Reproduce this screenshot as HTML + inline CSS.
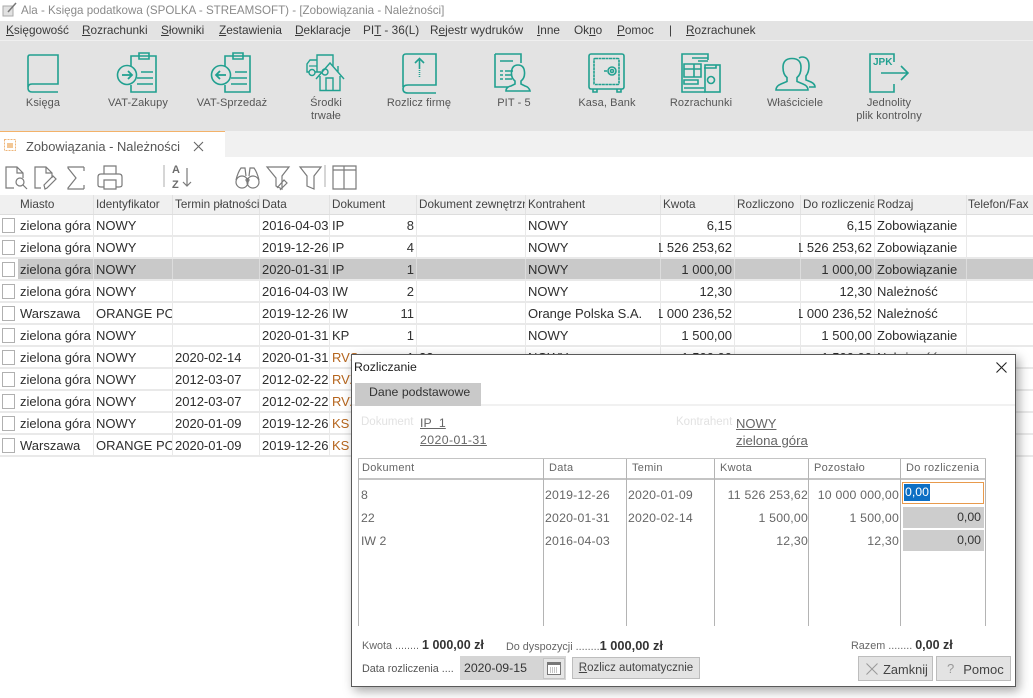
<!DOCTYPE html>
<html><head><meta charset="utf-8"><style>
html,body{margin:0;padding:0;width:1033px;height:698px;overflow:hidden;background:#fff;font-family:"Liberation Sans",sans-serif;color:#333}
.a{position:absolute;white-space:nowrap}
u{text-decoration:underline}
.m{top:23px;font-size:11.8px;color:#3a3a3a}
.l{top:97px;font-size:11px;color:#555;text-align:center;line-height:13px;letter-spacing:.1px;transform:translateX(-50%)}
.r{position:absolute;left:0;width:1033px;height:20px;border-bottom:2px solid #e9e9e9}
.r.h{height:19px;top:195px;background:#f0f0f0;border-bottom:1px solid #ddd}
.r.s{background:linear-gradient(#c9c9c9,#c9c9c9) 18px 0 no-repeat}
.r>i{position:absolute;font-style:normal;top:0;height:100%;line-height:21px;font-size:13px;color:#2e2e2e;overflow:hidden;white-space:nowrap;border-right:1px solid #e9e9e9;box-sizing:content-box;display:flex;justify-content:flex-start}
.r.h>i{font-size:11.7px;line-height:20px;color:#444;border-right:1px solid #e2e2e2}
.r.s>i{border-right-color:#dcdcdc}
.r>b{position:absolute;left:2px;top:3px;width:11px;height:13px;border:1px solid #b0b0b0;background:#fff}
.c1{left:20px;width:73px}.c2{left:96px;width:76px}.c3{left:175px;width:84px}.c4{left:262px;width:67px}
.c5{left:332px;width:84px}.c6{left:419px;width:106px}.c7{left:528px;width:132px}
.c8{left:659px;width:73px;padding-right:2px;justify-content:flex-end!important}.c9{left:737px;width:63px}
.c10{left:799px;width:73px;padding-right:2px;justify-content:flex-end!important}.c11{left:877px;width:89px}.c12{left:968px;width:65px;border:0!important}
.n{position:absolute;left:332px;top:0;width:82px;text-align:right;line-height:21px;font-size:13px;z-index:2}
.o{color:#b5651d!important}
.g{position:absolute;font-size:12.3px;color:#666;white-space:nowrap}
.t{letter-spacing:.2px}
.v{position:absolute;top:459px;width:1px;height:167px;background:#b4b4b4}
.btn{position:absolute;background:#e3e3e3;border:1px solid #bdbdbd;box-sizing:border-box;font-size:12.3px;color:#444;text-align:center}
</style></head><body>

<!-- title bar -->
<svg class="a" style="left:2px;top:2px" width="16" height="16" viewBox="0 0 16 16"><path d="M1 4h10v10H1z" fill="#e2e2e2" stroke="#aaa"/><path d="M6 10L14 1" stroke="#777" stroke-width="1.500"/></svg>
<div class="a" style="left:21px;top:3px;font-size:11.6px;line-height:15px;color:#8a8a8a">Ala - Księga podatkowa (SPOLKA - STREAMSOFT) - [Zobowiązania - Należności]</div>

<!-- ribbon -->
<div class="a" style="left:0;top:21px;width:1033px;height:110px;background:#e3e3e3"></div>
<div class="a" style="left:0;top:40px;width:1033px;height:1px;background:#efefef"></div>
<div class="a m" style="left:6px"><u>K</u>sięgowość</div>
<div class="a m" style="left:82px"><u>R</u>ozrachunki</div>
<div class="a m" style="left:161px"><u>S</u>łowniki</div>
<div class="a m" style="left:219px"><u>Z</u>estawienia</div>
<div class="a m" style="left:295px"><u>D</u>eklaracje</div>
<div class="a m" style="left:363px">PI<u>T</u> - 36(L)</div>
<div class="a m" style="left:430px">R<u>e</u>jestr wydruków</div>
<div class="a m" style="left:537px"><u>I</u>nne</div>
<div class="a m" style="left:574px">Ok<u>n</u>o</div>
<div class="a m" style="left:617px"><u>P</u>omoc</div>
<div class="a m" style="left:669px">|</div>
<div class="a m" style="left:686px"><u>R</u>ozrachunek</div>

<svg class="a" style="left:0;top:45px" width="1033" height="55" viewBox="0 45 1033 55" fill="none" stroke="#21a090" stroke-width="1.6">
<!-- ksiega -->
<path d="M28 87V57q0-2 2-2H58V84H32q-4 0-4 4t4 4H58"/>
<!-- vat zakupy -->
<path d="M131 66V56H156V92H131V85M139 56V53H149V59H139V56M141 72H153M137 78H153M137 84H153"/><circle cx="127" cy="75" r="9.5"/>
<path d="M122 75H132M128 71l4 4-4 4" stroke-width="1.8"/>
<!-- vat sprzedaz -->
<path d="M225 66V56H250V92H225V85M233 56V53H243V59H233V56M235 72H247M231 78H247M231 84H247"/><circle cx="221" cy="75" r="9.5"/>
<path d="M216 75H226M220 71l-4 4 4 4" stroke-width="1.8"/>
<!-- srodki -->
<path d="M317 72V55H333V66M317 60H310L307 64V72H309M315 72H321" stroke-width="1.4"/><path d="M309 66H317" stroke-width="1.200"/><circle cx="312" cy="72.500" r="3" stroke-width="1.4"/><circle cx="325" cy="72" r="3" stroke-width="1.4"/>
<path d="M316 79L330 63 344 79M338 72V66M320 76V90.500H340V76M326 90.500V78H333V90.500" stroke-width="1.4"/>
<!-- rozlicz -->
<path d="M403 87V57q0-3 3-3H436V85H408q-5 0-5 4t5 4H436"/>
<path d="M419.500 60V78" stroke-dasharray="9 1 1 1 1 1 1 1 1 1"/><path d="M415 63l4.500-4.500L424 63"/>
<!-- pit -->
<path d="M495 54H521V63M495 54V87H508M500 61H513M500 71H503M505 71H513M500 75H503M505 75H512M500 79H503M505 79H512"/>
<path d="M506 91q0-4 5-5l4-2v-3q-4-3-3.500-9 .5-7 6.500-7t6.500 7q.5 6-3.500 9v3l4 2q4 1 5 5z"/>
<!-- kasa -->
<rect x="589" y="54" width="35" height="35" rx="2"/><rect x="594" y="58.500" width="25" height="26" rx="1" stroke-dasharray="3 .5"/><circle cx="612" cy="71" r="4"/><circle cx="612" cy="71" r="1.500"/><path d="M607 71H604M593 89v3h4v-3M617 89v3h4v-3"/>
<!-- rozrachunki -->
<path d="M708 60V54H682V92H705M692 58H708M698 61H708M684 64H701V77H684ZM684 69H701M694 64V77M684 80H698V84H684ZM684 88H704"/>
<rect x="705" y="65" width="15" height="27"/><path d="M704 68H716V65"/><circle cx="711" cy="80" r="3.500"/>
<!-- wlasciciele -->
<path d="M776 90q0-4 5-6l6-2.500v-4q-4-3-4-10 0-9 9-9t9 9q0 7-4 10v4l6 2.500q5 2 5 6z"/>
<path d="M799 58q2-1 3-1 7 0 7 9 0 6-3 10v4l5 2q4 2 4 5h-6"/>
<!-- jpk -->
<path d="M894 62V54H870V92H894V84M881 73H908M901 66l7 7-7 7"/>
</svg>
<div class="a" style="left:873px;top:56px;font-size:10.500px;font-weight:bold;color:#21a090;transform:scaleX(.95);transform-origin:left">JPK</div>

<div class="a l" style="left:43px">Księga</div>
<div class="a l" style="left:138px">VAT-Zakupy</div>
<div class="a l" style="left:232px">VAT-Sprzedaż</div>
<div class="a l" style="left:326px">Środki<br>trwałe</div>
<div class="a l" style="left:419px">Rozlicz firmę</div>
<div class="a l" style="left:514px">PIT - 5</div>
<div class="a l" style="left:607px">Kasa, Bank</div>
<div class="a l" style="left:701px">Rozrachunki</div>
<div class="a l" style="left:795px">Właściciele</div>
<div class="a l" style="left:889px">Jednolity<br>plik kontrolny</div>

<!-- tab bar -->
<div class="a" style="left:0;top:131px;width:1033px;height:26px;background:#f1f1f1"></div>
<div class="a" style="left:0;top:131px;width:225px;height:27px;background:#fff;border-top:1px solid #f3b26a;box-sizing:border-box"></div>
<svg class="a" style="left:3px;top:138px" width="14" height="14"><rect x="1.500" y="1.500" width="11" height="11" fill="#fff" stroke="#eeb57a" stroke-dasharray="2 1"/><rect x="4" y="5" width="6" height="5" fill="#f3c795"/></svg>
<div class="a" style="left:26px;top:139px;font-size:12.9px;color:#555">Zobowiązania - Należności</div>
<svg class="a" style="left:193px;top:141px" width="11" height="11" stroke="#666" stroke-width="1.100"><path d="M1 1L10 10M10 1L1 10"/></svg>

<!-- toolbar -->
<svg class="a" style="left:0;top:157px" width="360" height="38" viewBox="0 157 360 38" fill="none" stroke="#7a7a7a" stroke-width="1.200">
<path d="M14 188H6V167H17L23 173V178M17 167V173H23"/><circle cx="20" cy="182" r="4"/><path d="M23 185L27 189"/>
<path d="M41 188H35V167H46L52 173V178M46 167V173H52M45 189L44 185 53 176 56 179 47 188Z"/>
<path d="M84 167H68V168L76 178 68 188V189H84M84 167V171M84 189V185"/>
<path d="M104 174V166H116V174M101 174H119Q122 174 122 177V185Q122 187 119 187H116M104 187H101Q98 187 98 185V177Q98 174 101 174M104 180H116V189H104Z"/>
<path d="M164 165V187" stroke="#bbb"/>
<path d="M187 168V186M183 182L187 186 191 182"/>
<path d="M325 165V187" stroke="#bbb"/>
<circle cx="242" cy="182" r="6"/><circle cx="253" cy="182" r="6"/><circle cx="247.500" cy="180" r="1.500"/><path d="M236 180Q238 172 241 168H245L246 176M259 180Q257 172 254 168H250L249 176"/>
<path d="M267 167H289L282 176V189L276 186V178ZM277 188L284 180 287 183 280 190"/>
<path d="M300 167H321L314 176V189L307 186V176Z"/>
<path d="M333 166H356V189H333ZM333 170H356M344 166V189"/>
</svg>
<div class="a" style="left:172px;top:163px;font-size:11px;font-weight:bold;color:#6c6c6c;line-height:15px">A<br>Z</div>

<!-- grid -->
<div class="r h"><i class="c1">Miasto</i><i class="c2">Identyfikator</i><i class="c3">Termin płatności</i><i class="c4">Data</i><i class="c5">Dokument</i><i class="c6">Dokument zewnętrzn</i><i class="c7">Kontrahent</i><i class="c8" style="justify-content:flex-start!important;left:663px;width:71px;padding:0">Kwota</i><i class="c9">Rozliczono</i><i class="c10" style="justify-content:flex-start!important;left:803px;width:71px;padding:0">Do rozliczenia</i><i class="c11">Rodzaj</i><i class="c12">Telefon/Fax</i></div>

<div class="r" style="top:215px"><b></b><i class="c1">zielona góra</i><i class="c2">NOWY</i><i class="c3"></i><i class="c4">2016-04-03</i><i class="c5">IP</i><span class="n">8</span><i class="c6"></i><i class="c7">NOWY</i><i class="c8">6,15</i><i class="c9"></i><i class="c10">6,15</i><i class="c11">Zobowiązanie</i><i class="c12"></i></div>
<div class="r" style="top:237px"><b></b><i class="c1">zielona góra</i><i class="c2">NOWY</i><i class="c3"></i><i class="c4">2019-12-26</i><i class="c5">IP</i><span class="n">4</span><i class="c6"></i><i class="c7">NOWY</i><i class="c8">11 526 253,62</i><i class="c9"></i><i class="c10">11 526 253,62</i><i class="c11">Zobowiązanie</i><i class="c12"></i></div>
<div class="r s" style="top:259px"><b></b><i class="c1">zielona góra</i><i class="c2">NOWY</i><i class="c3"></i><i class="c4">2020-01-31</i><i class="c5">IP</i><span class="n">1</span><i class="c6"></i><i class="c7">NOWY</i><i class="c8">1 000,00</i><i class="c9"></i><i class="c10">1 000,00</i><i class="c11">Zobowiązanie</i><i class="c12"></i></div>
<div class="r" style="top:281px"><b></b><i class="c1">zielona góra</i><i class="c2">NOWY</i><i class="c3"></i><i class="c4">2016-04-03</i><i class="c5">IW</i><span class="n">2</span><i class="c6"></i><i class="c7">NOWY</i><i class="c8">12,30</i><i class="c9"></i><i class="c10">12,30</i><i class="c11">Należność</i><i class="c12"></i></div>
<div class="r" style="top:303px"><b></b><i class="c1">Warszawa</i><i class="c2">ORANGE POLSKA</i><i class="c3"></i><i class="c4">2019-12-26</i><i class="c5">IW</i><span class="n">11</span><i class="c6"></i><i class="c7">Orange Polska S.A.</i><i class="c8">11 000 236,52</i><i class="c9"></i><i class="c10">11 000 236,52</i><i class="c11">Należność</i><i class="c12"></i></div>
<div class="r" style="top:325px"><b></b><i class="c1">zielona góra</i><i class="c2">NOWY</i><i class="c3"></i><i class="c4">2020-01-31</i><i class="c5">KP</i><span class="n">1</span><i class="c6"></i><i class="c7">NOWY</i><i class="c8">1 500,00</i><i class="c9"></i><i class="c10">1 500,00</i><i class="c11">Zobowiązanie</i><i class="c12"></i></div>
<div class="r" style="top:347px"><b></b><i class="c1">zielona góra</i><i class="c2">NOWY</i><i class="c3">2020-02-14</i><i class="c4">2020-01-31</i><i class="c5 o">RVS</i><span class="n">1</span><i class="c6">22</i><i class="c7">NOWY</i><i class="c8">1 500,00</i><i class="c9"></i><i class="c10">1 500,00</i><i class="c11">Należność</i><i class="c12"></i></div>
<div class="r" style="top:369px"><b></b><i class="c1">zielona góra</i><i class="c2">NOWY</i><i class="c3">2012-03-07</i><i class="c4">2012-02-22</i><i class="c5 o">RVZ</i><i class="c6"></i><i class="c7"></i><i class="c8"></i><i class="c9"></i><i class="c10"></i><i class="c11"></i><i class="c12"></i></div>
<div class="r" style="top:391px"><b></b><i class="c1">zielona góra</i><i class="c2">NOWY</i><i class="c3">2012-03-07</i><i class="c4">2012-02-22</i><i class="c5 o">RVZ</i><i class="c6"></i><i class="c7"></i><i class="c8"></i><i class="c9"></i><i class="c10"></i><i class="c11"></i><i class="c12"></i></div>
<div class="r" style="top:413px"><b></b><i class="c1">zielona góra</i><i class="c2">NOWY</i><i class="c3">2020-01-09</i><i class="c4">2019-12-26</i><i class="c5 o">KS</i><i class="c6"></i><i class="c7"></i><i class="c8"></i><i class="c9"></i><i class="c10"></i><i class="c11"></i><i class="c12"></i></div>
<div class="r" style="top:435px"><b></b><i class="c1">Warszawa</i><i class="c2">ORANGE POLSKA</i><i class="c3">2020-01-09</i><i class="c4">2019-12-26</i><i class="c5 o">KS</i><i class="c6"></i><i class="c7"></i><i class="c8"></i><i class="c9"></i><i class="c10"></i><i class="c11"></i><i class="c12"></i></div>

<!-- dialog -->
<div class="a" style="left:351px;top:354px;width:665px;height:333px;background:#fff;border:1px solid #5a5a5a;box-sizing:border-box;box-shadow:3px 4px 10px rgba(0,0,0,.35);z-index:5">
</div>
<div style="position:absolute;left:0;top:0;width:1033px;height:698px;z-index:6">
<div class="a" style="left:354px;top:360px;font-size:12.300px;color:#222">Rozliczanie</div>
<svg class="a" style="left:996px;top:362px" width="11" height="11" stroke="#222" stroke-width="1.100"><path d="M.5 .5L10.500 10.500M10.500 .5L.5 10.500"/></svg>
<div class="a" style="left:352px;top:404px;width:663px;height:2px;background:#f1f1f1"></div>
<div class="a" style="left:355px;top:383px;width:126px;height:23px;background:#c9c9c9;font-size:12.300px;color:#333;line-height:18px;text-indent:14px">Dane podstawowe</div>

<div class="g" style="left:361px;top:416px;color:#e2e2e2;font-size:11.500px">Dokument</div>
<div class="g" style="left:420px;top:416px;text-decoration:underline;letter-spacing:.1px">IP&nbsp; 1</div>
<div class="g" style="left:420px;top:433px;text-decoration:underline;letter-spacing:.4px">2020-01-31</div>
<div class="g" style="left:676px;top:416px;color:#e2e2e2;font-size:11.500px">Kontrahent</div>
<div class="g" style="left:736px;top:416px;text-decoration:underline;font-size:13px">NOWY</div>
<div class="g" style="left:736px;top:433px;text-decoration:underline;font-size:13.200px">zielona góra</div>

<div class="a" style="left:358px;top:458px;width:628px;height:1px;background:#c4c4c4"></div>
<div class="a" style="left:358px;top:478px;width:628px;height:2px;background:#c4c4c4"></div>
<div class="v" style="left:358px"></div><div class="v" style="left:543px"></div><div class="v" style="left:626px"></div><div class="v" style="left:714px"></div><div class="v" style="left:808px"></div><div class="v" style="left:900px"></div><div class="v" style="left:985px"></div>

<div class="g" style="left:362px;top:462px;font-size:11px;letter-spacing:.3px">Dokument</div>
<div class="g" style="left:549px;top:462px;font-size:11px;letter-spacing:.3px">Data</div>
<div class="g" style="left:632px;top:462px;font-size:11px;letter-spacing:.3px">Temin</div>
<div class="g" style="left:720px;top:462px;font-size:11px;letter-spacing:.3px">Kwota</div>
<div class="g" style="left:814px;top:462px;font-size:11px;letter-spacing:.3px">Pozostało</div>
<div class="g" style="left:906px;top:462px;font-size:11px;letter-spacing:.3px">Do rozliczenia</div>

<div class="g" style="left:361px;top:488px">8</div><div class="g t" style="left:545px;top:488px">2019-12-26</div><div class="g t" style="left:628px;top:488px">2020-01-09</div>
<div class="g t" style="right:225px;top:488px">11 526 253,62</div><div class="g t" style="right:134px;top:488px">10 000 000,00</div>
<div class="g" style="left:361px;top:511px">22</div><div class="g t" style="left:545px;top:511px">2020-01-31</div><div class="g t" style="left:628px;top:511px">2020-02-14</div>
<div class="g t" style="right:225px;top:511px">1 500,00</div><div class="g t" style="right:134px;top:511px">1 500,00</div>
<div class="g" style="left:361px;top:534px">IW 2</div><div class="g t" style="left:545px;top:534px">2016-04-03</div>
<div class="g t" style="right:225px;top:534px">12,30</div><div class="g t" style="right:134px;top:534px">12,30</div>

<div class="a" style="left:902px;top:482px;width:82px;height:22px;box-sizing:border-box;border:1px solid #e89a4c"></div>
<div class="a" style="left:904px;top:484px;background:#0d6fc4;color:#fff;font-size:12.300px;line-height:17px;padding:0 1px">0,00</div>
<div class="a" style="left:903px;top:507px;width:81px;height:21px;background:#cdcdcd;font-size:12.300px;color:#333;text-align:right;line-height:20px"><span style="margin-right:3px">0,00</span></div>
<div class="a" style="left:903px;top:530px;width:81px;height:21px;background:#cdcdcd;font-size:12.300px;color:#333;text-align:right;line-height:20px"><span style="margin-right:3px">0,00</span></div>

<div class="g" style="left:362px;top:638px;font-size:10.800px">Kwota ........ <b style="font-size:12.500px;color:#333">1 000,00 zł</b></div>
<div class="g" style="left:506px;top:638px;font-size:10.800px">Do dyspozycji ........<b style="font-size:12.800px;color:#333">1 000,00 zł</b></div>
<div class="g" style="left:851px;top:638px;font-size:10.800px">Razem ........ <b style="font-size:12.500px;color:#333">0,00 zł</b></div>
<div class="g" style="left:362px;top:663px;font-size:10.800px;color:#555">Data rozliczenia ....</div>
<div class="a" style="left:460px;top:656px;width:106px;height:24px;background:#d5d5d5;font-size:12.300px;color:#333;line-height:24px;text-indent:4px">2020-09-15</div>
<div class="a" style="left:543px;top:658px;width:22px;height:21px;background:#e6e6e6;border:1px solid #c4c4c4;box-sizing:border-box"></div>
<svg class="a" style="left:547px;top:662px" width="14" height="13"><rect x=".5" y=".5" width="13" height="12" fill="#fff" stroke="#777"/><rect x="1" y="1" width="12" height="2" fill="#777"/><path d="M3 6h8M3 8h8M3 10h8" stroke="#888" stroke-dasharray="1 1"/></svg>
<div class="btn" style="left:572px;top:657px;width:128px;height:22px;line-height:20px;font-size:11.500px"><u>R</u>ozlicz automatycznie</div>
<div class="btn" style="left:858px;top:656px;width:75px;height:25px;line-height:25px;text-indent:20px;font-size:12.800px">Zamknij</div>
<svg class="a" style="left:866px;top:663px" width="12" height="12" stroke="#999" stroke-width="1"><path d="M.5 .5L11.500 11.500M11.500 .5L.5 11.500"/></svg>
<div class="btn" style="left:936px;top:656px;width:75px;height:25px;line-height:25px;text-indent:20px;font-size:13px">Pomoc</div>
<div class="a" style="left:947px;top:661px;font-size:13px;color:#999;line-height:15px">?</div>
</div>
</body></html>
